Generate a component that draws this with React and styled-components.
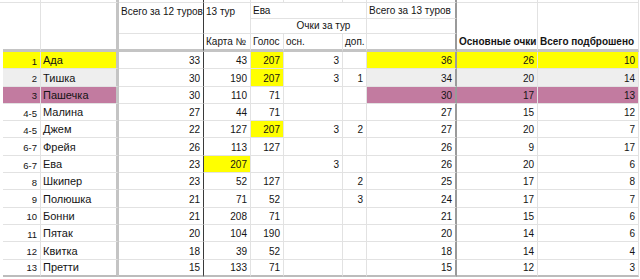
import React from 'react';
import styled, { createGlobalStyle } from 'styled-components';

const Global = createGlobalStyle`
  html, body { margin: 0; padding: 0; background: #fff; }
  body { font-family: "Liberation Sans", Arial, sans-serif; }
`;

const LIGHT = '1px solid #e2e2e2';
const THICK = '3px solid #c4c4c4';
const DARK = '1px solid #3a3a3a';
const MID = '2px solid #9a9a9a';
const BOTTOM = '2px solid #bcbcbc';

const YELLOW = '#ffff00';
const GRAY = '#eeeeee';
const PINK = '#c27ba0';

// right border per grid column (1 = sliver, 2 = A ... 11 = J, 12 = rest)
const COL_BORDER = {
  1: LIGHT, 2: LIGHT, 3: THICK, 4: DARK, 5: LIGHT, 6: LIGHT,
  7: LIGHT, 8: LIGHT, 9: MID, 10: LIGHT, 11: LIGHT, 12: 'none',
};

const Sheet = styled.div`
  display: grid;
  grid-template-columns: 3px 38px 78px 85px 47px 33px 59px 24px 90px 81px 101px 1px;
  grid-template-rows: 3px 16px 15px 18px repeat(13, 17.3px) 1fr;
  width: 640px;
  height: 279px;
  overflow: hidden;
  color: #141414;
  background: #fff;
`;

const Cell = styled.div`
  grid-column: ${(p) => p.$col} / span ${(p) => p.$cs || 1};
  grid-row: ${(p) => p.$row} / span ${(p) => p.$rs || 1};
  box-sizing: border-box;
  min-width: 0;
  background: ${(p) => p.$bg || '#fff'};
  border-right: ${(p) => p.$br || COL_BORDER[p.$col + (p.$cs || 1) - 1]};
  border-bottom: ${(p) => p.$bb || LIGHT};
  display: flex;
  align-items: flex-end;
  justify-content: ${(p) =>
    p.$align === 'right' ? 'flex-end' : p.$align === 'center' ? 'center' : 'flex-start'};
  padding: 0 3px 2px 2px;
  font-size: 10px;
  line-height: 1;
  white-space: nowrap;
  overflow: hidden;
`;

const SliverCell = styled(Cell)``;

const HeaderCell = styled(Cell)`
  font-size: 10px;
  font-weight: ${(p) => (p.$bold ? 700 : 400)};
  padding-left: ${(p) => (p.$align === 'center' ? '0' : '2px')};
`;

const RankCell = styled(Cell)`
  justify-content: flex-end;
  font-size: 9.5px;
  padding-right: 3px;
`;

const NameCell = styled(Cell)`
  font-size: 11px;
  padding-left: 2px;
  padding-bottom: 2px;
`;

const NumCell = styled(Cell)`
  justify-content: flex-end;
  font-size: 10px;
  padding-right: 3px;
`;

const rows = [
  { rank: '1', name: 'Ада', c: 33, d: 43, e: 207, f: 3, g: '', h: 36, i: 26, j: 10, bg: YELLOW, eHi: true },
  { rank: '2', name: 'Тишка', c: 30, d: 190, e: 207, f: 3, g: 1, h: 34, i: 20, j: 14, bg: GRAY, eHi: true },
  { rank: '3', name: 'Пашечка', c: 30, d: 110, e: 71, f: '', g: '', h: 30, i: 17, j: 13, bg: PINK },
  { rank: '4-5', name: 'Малина', c: 27, d: 44, e: 71, f: '', g: '', h: 27, i: 15, j: 12 },
  { rank: '4-5', name: 'Джем', c: 22, d: 127, e: 207, f: 3, g: 2, h: 27, i: 20, j: 7, eHi: true },
  { rank: '6-7', name: 'Фрейя', c: 26, d: 113, e: 127, f: '', g: '', h: 26, i: 9, j: 17 },
  { rank: '6-7', name: 'Ева', c: 23, d: 207, e: '', f: 3, g: '', h: 26, i: 20, j: 6, dHi: true },
  { rank: '8', name: 'Шкипер', c: 23, d: 52, e: 127, f: '', g: 2, h: 25, i: 17, j: 8 },
  { rank: '9', name: 'Полюшка', c: 21, d: 71, e: 52, f: '', g: 3, h: 24, i: 17, j: 7 },
  { rank: '10', name: 'Бонни', c: 21, d: 208, e: 71, f: '', g: '', h: 21, i: 15, j: 6 },
  { rank: '11', name: 'Пятак', c: 20, d: 104, e: 190, f: '', g: '', h: 20, i: 14, j: 6 },
  { rank: '12', name: 'Квитка', c: 18, d: 39, e: 52, f: '', g: '', h: 18, i: 14, j: 4 },
  { rank: '13', name: 'Претти', c: 15, d: 133, e: 71, f: '', g: '', h: 15, i: 12, j: 3 },
];

const TOP_COLS = [1, 2, 3, 4, 5, 6, 7, 8, 9, 10, 11];

export default function App() {
  return (
    <>
      <Global />
      <Sheet>
        {TOP_COLS.map((c) => (
          <SliverCell key={`t${c}`} $col={c} $row={1} />
        ))}
        <SliverCell $col={1} $row={2} $rs={16} $bb="none" />

        {/* header */}
        <HeaderCell $col={2} $row={2} $rs={3} $bb={THICK} />
        <HeaderCell $col={3} $row={2} $rs={3} $bb={THICK} />

        <HeaderCell $col={4} $row={2} $bb="none">Всего за 12 туров</HeaderCell>
        <HeaderCell $col={5} $row={2} $bb="none">13 тур</HeaderCell>
        <HeaderCell $col={6} $row={2} $cs={3}>Ева</HeaderCell>
        <HeaderCell $col={9} $row={2}>Всего за 13 туров</HeaderCell>

        <HeaderCell $col={4} $row={3} />
        <HeaderCell $col={5} $row={3} />
        <HeaderCell $col={6} $row={3} $br="none" />
        <HeaderCell $col={7} $row={3} $cs={2} $align="center">Очки за тур</HeaderCell>
        <HeaderCell $col={9} $row={3} />

        <HeaderCell $col={4} $row={4} $bb={THICK} />
        <HeaderCell $col={5} $row={4} $bb={THICK}>Карта №</HeaderCell>
        <HeaderCell $col={6} $row={4} $bb={THICK}>Голос</HeaderCell>
        <HeaderCell $col={7} $row={4} $bb={THICK}>осн.</HeaderCell>
        <HeaderCell $col={8} $row={4} $bb={THICK}>доп.</HeaderCell>
        <HeaderCell $col={9} $row={4} $bb={THICK} />

        <HeaderCell $col={10} $row={2} $rs={3} $bb={THICK} $bold>Основные очки</HeaderCell>
        <HeaderCell $col={11} $row={2} $rs={3} $bb={THICK} $bold>Всего подброшено</HeaderCell>

        {rows.map((r, idx) => {
          const row = 5 + idx;
          const bb = idx === rows.length - 1 ? BOTTOM : undefined;
          return (
            <React.Fragment key={idx}>
              <RankCell $col={2} $row={row} $bg={r.bg} $bb={bb}>{r.rank}</RankCell>
              <NameCell $col={3} $row={row} $bg={r.bg} $bb={bb}>{r.name}</NameCell>
              <NumCell $col={4} $row={row} $bb={bb}>{r.c}</NumCell>
              <NumCell $col={5} $row={row} $bg={r.dHi ? YELLOW : undefined} $bb={bb}>{r.d}</NumCell>
              <NumCell $col={6} $row={row} $bg={r.eHi ? YELLOW : undefined} $bb={bb}>{r.e}</NumCell>
              <NumCell $col={7} $row={row} $bb={bb}>{r.f}</NumCell>
              <NumCell $col={8} $row={row} $bb={bb}>{r.g}</NumCell>
              <NumCell $col={9} $row={row} $bg={r.bg} $bb={bb}>{r.h}</NumCell>
              <NumCell $col={10} $row={row} $bg={r.bg} $bb={bb}>{r.i}</NumCell>
              <NumCell $col={11} $row={row} $bg={r.bg} $bb={bb}>{r.j}</NumCell>
            </React.Fragment>
          );
        })}
      </Sheet>
    </>
  );
}
